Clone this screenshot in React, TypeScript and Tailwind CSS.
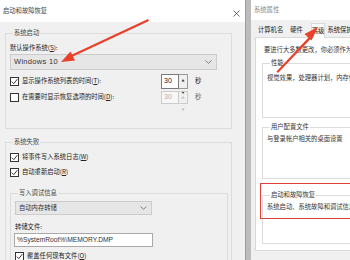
import React from "react";

const Check = ({ checked }: { checked?: boolean }) => (
    <span className="w-[9px] h-[9px] border border-[#333333] bg-white flex items-center justify-center shrink-0">
        {checked && (
            <svg width="7" height="7" viewBox="0 0 7 7">
                <path d="M0.8 3.6 L2.8 5.6 L6.3 1.2" fill="none" stroke="#222" strokeWidth="0.9" />
            </svg>
        )}
    </span>
);

const Chevron = () => (
    <svg width="7" height="4" viewBox="0 0 7 4">
        <path d="M0.5 0.5 L3.5 3.3 L6.5 0.5" fill="none" stroke="#666" strokeWidth="0.8" />
    </svg>
);

const Spin = ({ disabled }: { disabled?: boolean }) => (
    <div className="flex items-center">
        <div
            className={
                disabled
                    ? "w-[18px] h-[13px] border border-[#cccccc] bg-[#f7f7f7] text-[#b0b0b0] flex items-center pl-[2px] text-[7px] font-['Liberation_Sans',sans-serif]"
                    : "w-[18px] h-[15px] border border-[#7a7a7a] bg-white flex items-center pl-[2px] text-[7px] font-['Liberation_Sans',sans-serif]"
            }
        >
            30
        </div>
        <div
            className={
                disabled
                    ? "w-[9px] h-[13px] border-y border-r border-[#cccccc] flex flex-col items-center justify-around text-[3px] text-[#bbbbbb]"
                    : "w-[9px] h-[15px] border-y border-r border-[#9a9a9a] flex flex-col items-center justify-around text-[3px] text-[#333]"
            }
        >
            <span>▲</span>
            <span>▼</span>
        </div>
        <span className={disabled ? "ml-[7px] text-[#666]" : "ml-[7px]"}>秒</span>
    </div>
);

export default function App() {
    return (
        <div className="relative w-[350px] h-[260px] flex overflow-hidden text-[6.3px] leading-[12px] text-[#222222] font-['Noto_Sans_CJK_SC',sans-serif]">
            {/* 启动和故障恢复 dialog */}
            <div className="w-[245px] shrink-0 flex flex-col bg-[#f0f0f0] overflow-hidden">
                <div className="h-[22px] shrink-0 bg-white flex items-center justify-between pl-[3px] pr-[5px] text-[#444]">
                    <span>启动和故障恢复</span>
                    <svg width="7" height="7" viewBox="0 0 7 7" className="mt-[5px]">
                        <path d="M0.5 0.5 L6.5 6.5 M6.5 0.5 L0.5 6.5" stroke="#444" strokeWidth="0.8" />
                    </svg>
                </div>

                <fieldset className="shrink-0 ml-[5px] mt-[5px] w-[227px] border border-[#dcdcdc] pl-[4px] pb-[23px]">
                    <legend className="ml-[3px] px-[1px] text-[#444]">系统启动</legend>
                    <div className="mt-[3px]">默认操作系统(<u>S</u>):</div>
                    <div className="w-[207px] h-[16px] bg-[#e6e6e6] border border-[#cccccc] flex items-center justify-between pl-[3px] pr-[4px] text-[7.5px] tracking-[0.3px] text-[#333] font-['Liberation_Sans',sans-serif]">
                        <span>Windows 10</span>
                        <Chevron />
                    </div>
                    <div className="mt-[3px] h-[16px] flex items-center">
                        <Check checked />
                        <span className="ml-[3px] w-[139px]">显示操作系统列表的时间(<u>T</u>):</span>
                        <Spin />
                    </div>
                    <div className="h-[16px] flex items-center">
                        <Check />
                        <span className="ml-[3px] w-[139px]">在需要时显示恢复选项的时间(<u>D</u>):</span>
                        <Spin disabled />
                    </div>
                </fieldset>

                <fieldset className="shrink-0 ml-[5px] mt-[7px] w-[227px] border border-[#dcdcdc] pl-[4px] pb-[20px]">
                    <legend className="ml-[3px] px-[1px] text-[#444]">系统失败</legend>
                    <div className="mt-[2px] h-[14px] flex items-center">
                        <Check checked />
                        <span className="ml-[3px]">将事件写入系统日志(<u>W</u>)</span>
                    </div>
                    <div className="mt-[1px] h-[14px] flex items-center">
                        <Check checked />
                        <span className="ml-[3px]">自动重新启动(<u>R</u>)</span>
                    </div>
                    <fieldset className="mt-[8px] w-[218px] border border-[#dcdcdc] pl-[4px] pb-[10px]">
                        <legend className="ml-[3px] px-[1px] text-[#444]">写入调试信息</legend>
                        <div className="mt-[2px] w-[137px] h-[14px] bg-[#e6e6e6] border border-[#cccccc] flex items-center justify-between pl-[3px] pr-[4px] text-[#333]">
                            <span>自动内存转储</span>
                            <Chevron />
                        </div>
                        <div className="mt-[6px]">转储文件:</div>
                        <div className="w-[139px] h-[14px] -ml-[1px] bg-white border border-[#a9a9a9] flex items-center pl-[2px] text-[6.7px] text-[#333] font-['Liberation_Sans',sans-serif]">
                            %SystemRoot%\MEMORY.DMP
                        </div>
                        <div className="mt-[3px] h-[12px] flex items-center">
                            <Check checked />
                            <span className="ml-[3px]">覆盖任何现有文件(<u>O</u>)</span>
                        </div>
                    </fieldset>
                </fieldset>
            </div>

            {/* gap between windows */}
            <div className="w-[6px] shrink-0 bg-[#bcbcbc] border-l border-[#9c9c9c]" />

            {/* 系统属性 dialog */}
            <div className="flex-1 min-w-0 flex flex-col bg-[#f0f0f0] overflow-hidden">
                <div className="h-[20px] shrink-0 bg-white flex items-center pl-[3px] text-[#888]">系统属性</div>
                <div className="h-[17px] shrink-0 flex items-end whitespace-nowrap">
                    <span className="ml-[7px] h-[14px] flex items-center">计算机名</span>
                    <span className="ml-[7px] h-[14px] flex items-center">硬件</span>
                    <span className="relative ml-[8px] w-[27px] h-[15px] -mb-px bg-white border-x border-t border-[#d9d9d9] flex items-center justify-center">
                        高级
                    </span>
                    <span className="ml-[2px] h-[14px] flex items-center">系统保护</span>
                </div>
                <div className="ml-[4px] w-[110px] h-[214px] shrink-0 bg-white border border-[#d9d9d9] pl-[6px] whitespace-nowrap text-[#333]">
                    <div className="mt-[6px] ml-[2px]">要进行大多数更改，你必须作为管理员登录。</div>
                    <fieldset className="mt-[2px] border border-[#dcdcdc] pl-[4px] pb-[33px]">
                        <legend className="ml-[3px] px-[1px] leading-[10px]">性能</legend>
                        <div className="mt-[4px]">视觉效果，处理器计划，内存使用，以及虚拟内存</div>
                    </fieldset>
                    <fieldset className="mt-[4px] border border-[#dcdcdc] pl-[4px] pb-[33px]">
                        <legend className="ml-[3px] px-[1px] leading-[10px]">用户配置文件</legend>
                        <div className="mt-[1px]">与登录帐户相关的桌面设置</div>
                    </fieldset>
                    <fieldset className="mt-[11px] border border-[#dcdcdc] pl-[4px] pb-[30px]">
                        <legend className="ml-[3px] px-[1px] leading-[10px]">启动和故障恢复</legend>
                        <div className="mt-[1px]">系统启动、系统故障和调试信息</div>
                    </fieldset>
                </div>
            </div>

            {/* red highlight box */}
            <div className="absolute left-[260px] top-[183px] w-[95px] h-[36px] border-[1.5px] border-[#e0403a]" />

            {/* red arrows */}
            <svg className="absolute left-0 top-0 pointer-events-none" width="350" height="260" viewBox="0 0 350 260">
                <polygon points="148,19 149,21 72,57 71,55" fill="#e8412c" />
                <polygon points="61,62 75,60.5 70.5,51.5" fill="#e8412c" />
                <polygon points="278,73 276.5,71.5 309,37 311,38.5" fill="#e8412c" />
                <polygon points="318,27 311.5,40.5 304.5,34" fill="#e8412c" />
            </svg>
        </div>
    );
}
